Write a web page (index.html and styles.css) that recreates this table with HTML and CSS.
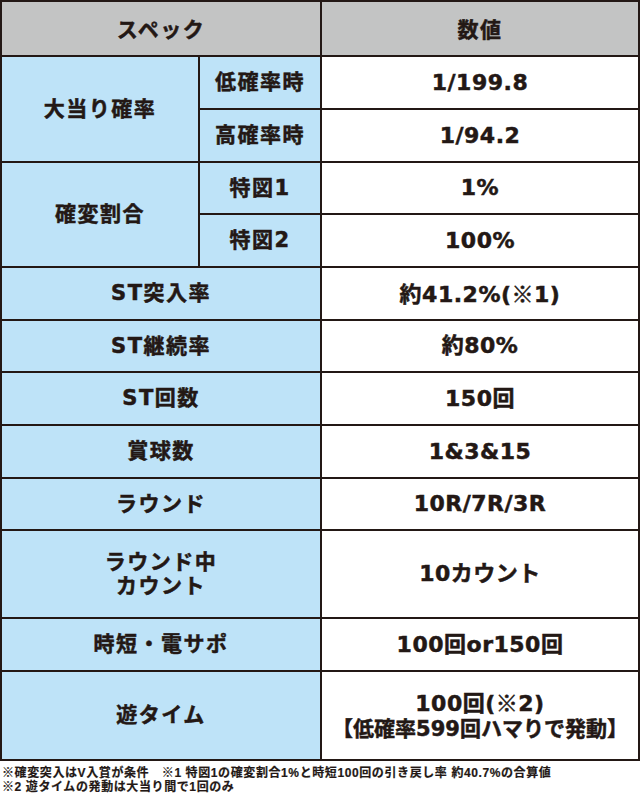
FILE: index.html
```html
<!DOCTYPE html>
<html lang="ja">
<head>
<meta charset="utf-8">
<title>スペック</title>
<link rel="stylesheet" href="styles.css">
</head>
<body>
<div class="spec">
  <div class="cell head span2">スペック</div>
  <div class="cell head">数値</div>

  <div class="cell label rows2">大当り確率</div>
  <div class="cell label">低確率時</div>
  <div class="cell value">1/199.8</div>
  <div class="cell label">高確率時</div>
  <div class="cell value">1/94.2</div>

  <div class="cell label rows2">確変割合</div>
  <div class="cell label">特図1</div>
  <div class="cell value">1%</div>
  <div class="cell label">特図2</div>
  <div class="cell value">100%</div>

  <div class="cell label span2">ST突入率</div>
  <div class="cell value"><div>約41.2%(<span class="jp">※</span>1)</div></div>

  <div class="cell label span2">ST継続率</div>
  <div class="cell value">約80%</div>

  <div class="cell label span2">ST回数</div>
  <div class="cell value">150回</div>

  <div class="cell label span2">賞球数</div>
  <div class="cell value">1&amp;3&amp;15</div>

  <div class="cell label span2">ラウンド</div>
  <div class="cell value">10R/7R/3R</div>

  <div class="cell label span2"><div class="lines">ラウンド中<br>カウント</div></div>
  <div class="cell value">10カウント</div>

  <div class="cell label span2">時短・電サポ</div>
  <div class="cell value">100回or150回</div>

  <div class="cell label span2">遊タイム</div>
  <div class="cell value"><div class="lines-v">100回(<span class="jp">※</span>2)<br><span class="small">【低確率599回ハマりで発動】</span></div></div>
</div>
<div class="notes">
  <p>※確変突入はV入賞が条件　※1 特図1の確変割合1%と時短100回の引き戻し率 約40.7%の合算値</p>
  <p>※2 遊タイムの発動は大当り間で1回のみ</p>
</div>
</body>
</html>
```

FILE: styles.css
```css
html, body {
  margin: 0;
  padding: 0;
  background: #ffffff;
}

body {
  width: 640px;
  color: #231815;
  font-family: "Noto Sans CJK JP", sans-serif;
  font-weight: 700;
}

.spec {
  display: grid;
  grid-template-columns: 196px 120px 1fr;
  grid-template-rows: 53px 51px 51px 50px 51px 51px 50px 51px 51px 50px 86px 51px 87px;
  gap: 2px;
  padding: 2px;
  background: #231815;
}

.cell {
  display: flex;
  align-items: center;
  justify-content: center;
  text-align: center;
  -webkit-text-stroke: 0.5px #231815;
}

.span2 {
  grid-column: span 2;
}

.rows2 {
  grid-row: span 2;
}

.head {
  background: #c3c4c4;
  font-size: 21px;
  letter-spacing: 1.5px;
  line-height: 1;
}

.label {
  background: #bee3f8;
  font-family: "DejaVu Sans", "Noto Sans CJK JP", sans-serif;
  font-size: 21px;
  letter-spacing: 1.5px;
  line-height: 1;
}

.lines {
  line-height: 24px;
}

.value {
  background: #ffffff;
  font-family: "DejaVu Sans", "Noto Sans CJK JP", sans-serif;
  font-size: 22px;
  letter-spacing: 0.5px;
  line-height: 1;
}

.lines-v {
  line-height: 25px;
}

.value .small {
  font-size: 21px;
  letter-spacing: 0;
}

.jp {
  font-family: "Noto Sans CJK JP", sans-serif;
}

.notes {
  padding: 5px 0 0 2px;
}

.notes p {
  margin: 0;
  font-family: "Liberation Sans", "Noto Sans CJK JP", sans-serif;
  font-size: 12px;
  letter-spacing: 0.6px;
  line-height: 14px;
  white-space: nowrap;
  -webkit-text-stroke: 0.2px #231815;
}
```
